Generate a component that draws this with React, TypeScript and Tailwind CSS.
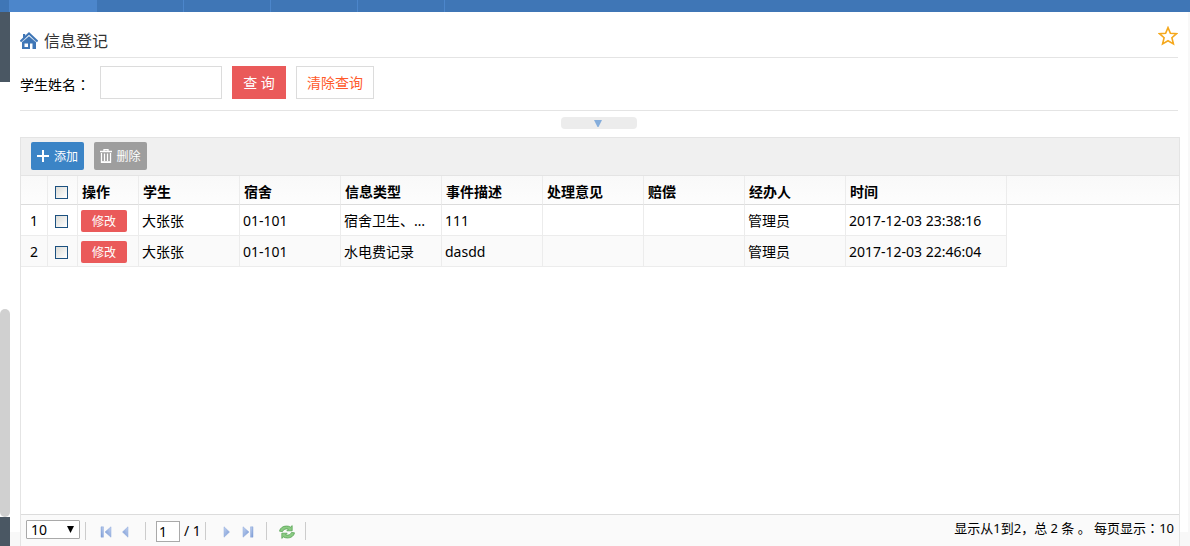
import { useState } from "react";

type Row = {
  student: string;
  room: string;
  kind: string;
  event: string;
  advice: string;
  compensation: string;
  operator: string;
  time: string;
};

const rows: Row[] = [
  { student: "大张张", room: "01-101", kind: "宿舍卫生、水电", event: "111", advice: "", compensation: "", operator: "管理员", time: "2017-12-03 23:38:16" },
  { student: "大张张", room: "01-101", kind: "水电费记录", event: "dasdd", advice: "", compensation: "", operator: "管理员", time: "2017-12-03 22:46:04" },
];

const headings = ["学生", "宿舍", "信息类型", "事件描述", "处理意见", "赔偿", "经办人", "时间"];

function NavBar() {
  return (
    <nav className="flex h-3 shrink-0 bg-[#3f76b6]">
      <span className="w-[9px]" />
      <span className="w-[88px] bg-[#4c86cb]" />
      {[1, 2, 3, 4].map((n) => (
        <span key={n} className="w-[87px] border-r border-[#4c86cb]" />
      ))}
    </nav>
  );
}

function HomeIcon() {
  return (
    <svg width="18" height="18" viewBox="0 0 18 18" aria-hidden="true">
      <path d="M2 9.500 9 4l7 5.500V17h-3.500v-5.500H10V17H2z" fill="#3f76b6" />
      <path d="M.4 9.400 9 1.400l8.600 8" fill="none" stroke="#3f76b6" strokeWidth="2" />
      <path d="M2.200 9.800 9 3.800l6.800 6" fill="none" stroke="#d3e1f1" strokeWidth=".8" />
      <path d="M3 2h2.200v2.600L3 6.500z" fill="#3f76b6" />
      <path d="M4.500 11.500H8V15H4.500z" fill="#fff" />
    </svg>
  );
}

function StarIcon() {
  return (
    <svg width="20" height="20" viewBox="0 0 20 20" fill="none" stroke="#f5a81c" strokeWidth="1.6" aria-hidden="true">
      <path d="M10 1.600 12.400 7.200l6.200.5-4.700 4 1.500 6.200-5.400-3.200-5.400 3.200 1.500-6.200-4.700-4 6.200-.5z" />
    </svg>
  );
}

function TrashIcon() {
  return (
    <svg width="12" height="14" viewBox="0 0 12 14" fill="none" stroke="#fff" aria-hidden="true">
      <path d="M4 2V.5h4V2M0 2.500h12" strokeWidth="1.3" />
      <path d="M1.500 4v9.300h9V4M4.500 4.500V12M7.500 4.500V12" strokeWidth="1.3" />
      <path d="M1 13h10" strokeWidth="1.6" />
    </svg>
  );
}

function Arrow({ left = false, bar = false }: { left?: boolean; bar?: boolean }) {
  return (
    <svg width="12" height="12" viewBox="0 0 12 12" aria-hidden="true">
      <defs>
        <linearGradient id="arrowFill" x1="0" y1="0" x2="1" y2="1">
          <stop offset="0" stopColor="#c4d4f2" />
          <stop offset="1" stopColor="#7495d2" />
        </linearGradient>
      </defs>
      <g transform={left ? "matrix(-1 0 0 1 12 0)" : undefined} fill="url(#arrowFill)" stroke="#8fa9da" strokeWidth=".5">
        <path d={bar ? "M1 .8 7 6l-6 5.200z" : "M4 .8 9.500 6 4 11.200z"} />
        {bar && <path d="M8.500.8H11v10.400H8.500z" />}
      </g>
    </svg>
  );
}

function RefreshIcon() {
  return (
    <svg width="16" height="16" viewBox="0 0 16 16" stroke="#4f9d4e" strokeWidth=".7" fill="#8bcb83" aria-hidden="true">
      <path d="M.5 7.200C1 4 4 2 7.500 2c1.600 0 3 .4 4 1.100L13.200 1.600v5.200H7.800l1.500-1.600C7 4.400 4.300 5.200 3.500 7.600z" />
      <path d="M15.500 8.800c-.5 3.200-3.500 5.200-7 5.200-1.600 0-3-.4-4-1.100L2.800 14.400V9.200h5.400l-1.500 1.600c2.300.8 5 0 5.800-2.400z" />
    </svg>
  );
}

function Tick({ label, checked, onChange }: { label: string; checked: boolean; onChange: () => void }) {
  return (
    <input
      type="checkbox"
      aria-label={label}
      checked={checked}
      onChange={onChange}
      className="ml-[7px] block size-[13px] appearance-none border border-[#1c5180] bg-linear-to-br from-[#dcdcd7] to-white checked:from-[#1c5180] checked:to-[#1c5180]"
    />
  );
}

function Divider() {
  return <span className="h-[18px] w-px bg-[#ccc]" />;
}

function Colon() {
  return <span className="font-['Noto_Sans_CJK_TC',sans-serif]" lang="zh-Hant">：</span>;
}

function SideScroll() {
  return (
    <aside className="flex w-[10px] shrink-0 flex-col">
      <div className="h-[70px] bg-[#4a5763]" />
      <div className="flex-1" />
      <div className="h-[208px] rounded-[5px] bg-[#d0d0d0]" />
      <div className="h-[29px] bg-[#4a5763]" />
    </aside>
  );
}

function Gutter({ wide = false }: { wide?: boolean }) {
  return (
    <div className={wide ? "flex w-[10px] shrink-0 flex-col" : "flex w-2 shrink-0 flex-col"}>
      <div className="flex-1" />
      <div className="h-[14px] bg-[#f8f8f8]" />
    </div>
  );
}

export default function App() {
  const [name, setName] = useState("");
  const [page, setPage] = useState("1");
  const [picked, setPicked] = useState<number[]>([]);
  const toggle = (i: number) => setPicked(picked.includes(i) ? picked.filter((p) => p !== i) : [...picked, i]);
  const all = picked.length === rows.length;

  return (
    <div className="flex min-h-screen flex-col bg-white font-['Noto_Sans','Noto_Sans_CJK_SC',sans-serif] text-sm text-black">
      <NavBar />
      <div className="flex flex-1">
        <SideScroll />
        <Gutter wide />
        <main className="flex min-w-0 flex-1 flex-col">
          <header className="mr-0.5 flex h-[46px] items-center border-b border-[#e4e4e4] pt-3">
            <HomeIcon />
            <h1 className="pl-1.5 text-base text-[#333]">信息登记</h1>
            <button type="button" aria-label="收藏" className="mb-2.5 ml-auto">
              <StarIcon />
            </button>
          </header>
          <form className="mr-0.5 flex h-[53px] items-start border-b border-[#e4e4e4] pt-2" onSubmit={(e) => e.preventDefault()}>
            <label htmlFor="student" className="w-20 leading-9">学生姓名<Colon /></label>
            <input
              id="student"
              value={name}
              onChange={(e) => setName(e.target.value)}
              className="h-[33px] w-[122px] border border-[#dcdcdc] px-2"
            />
            <button type="submit" className="ml-2.5 h-[33px] w-[54px] bg-[#ea5a5a] text-white">查 询</button>
            <button type="button" onClick={() => setName("")} className="ml-2.5 h-[33px] w-[78px] border border-[#dcdcdc] text-[#ff5a2b]">
              清除查询
            </button>
          </form>
          <div className="mr-0.5 flex justify-center py-1.5">
            <button type="button" aria-label="折叠" className="flex h-3 w-[76px] items-center justify-center rounded bg-[#ececec] pr-0.5">
              <svg width="8" height="7" viewBox="0 0 8 7" aria-hidden="true">
                <path d="M0 0h8L4.500 7h-1z" fill="#85addb" />
              </svg>
            </button>
          </div>

          <section className="mt-0.5 flex flex-1 flex-col border border-b-0 border-[#e4e4e4]">
            <div className="flex h-[38px] items-start gap-2.5 border-b border-[#e4e4e4] bg-[#f0f0f0] px-2.5 pt-1 text-xs text-white">
              <button type="button" className="flex h-7 w-[53px] items-center justify-center gap-1 rounded-xs bg-[#3b84c6]">
                <svg width="13" height="12" viewBox="0 0 13 12" stroke="#fff" strokeWidth="2" aria-hidden="true">
                  <path d="M0 6h12M6 0v12" />
                </svg>
                <span className="pt-0.5">添加</span>
              </button>
              <button type="button" className="flex h-7 w-[53px] items-center justify-center gap-1 rounded-xs bg-[#9e9e9e]">
                <TrashIcon />
                <span className="pt-0.5">删除</span>
              </button>
            </div>

            <table className="w-full table-fixed border-separate border-spacing-0 text-left">
              <colgroup>
                <col className="w-[27px]" />
                <col className="w-[30px]" />
                <col className="w-[61px]" />
                {headings.slice(0, -1).map((h) => (
                  <col key={h} className="w-[101px]" />
                ))}
                <col className="w-[161px]" />
                <col />
              </colgroup>
              <thead className="bg-linear-to-b from-[#f9f9f9] to-[#fdfdfd]">
                <tr className="h-[29px] *:border-b *:border-r *:border-r-[#ececec] *:border-b-[#dcdcdc] *:p-0 *:pt-1">
                  <th />
                  <th><Tick label="全选" checked={all} onChange={() => setPicked(all ? [] : rows.map((_, i) => i))} /></th>
                  <th><div className="pl-1 leading-6">操作</div></th>
                  {headings.map((h) => (
                    <th key={h}><div className="pl-1 leading-6">{h}</div></th>
                  ))}
                  <th className="border-r-0!" />
                </tr>
              </thead>
              <tbody>
                {rows.map((r, i) => (
                  <tr key={i} className="h-[31px] *:border-b *:border-r *:border-[#ececec] *:p-0 *:pt-0.5 even:*:bg-[#fafafa]">
                    <td className="text-center">{i + 1}</td>
                    <td><Tick label={"选择" + (i + 1)} checked={picked.includes(i)} onChange={() => toggle(i)} /></td>
                    <td>
                      <button type="button" className="ml-[3px] block h-[22px] w-[46px] rounded-xs bg-[#ea5a5a] pt-0.5 text-xs text-white">修改</button>
                    </td>
                    {[r.student, r.room, r.kind, r.event, r.advice, r.compensation, r.operator, r.time].map((v, k) => (
                      <td key={k}><div className="truncate pr-3 pl-[3px]">{v}</div></td>
                    ))}
                    <td className="border-0! bg-white!" />
                  </tr>
                ))}
              </tbody>
            </table>

            <footer className="mt-auto flex h-8 items-start border-t border-[#dcdcdc] bg-[#fafafa] px-[5px]">
              <div className="relative mt-[5px]">
                <select aria-label="每页条数" className="block h-[19px] w-[54px] appearance-none rounded-[1px] border border-[#a9a9a9] bg-white pl-1 leading-4">
                  <option>10</option>
                  <option>20</option>
                  <option>50</option>
                </select>
                <svg className="pointer-events-none absolute top-1.5 right-1.5" width="7" height="7" viewBox="0 0 7 7" aria-hidden="true">
                  <path d="M0 0h7L3.500 7z" />
                </svg>
              </div>
              <div className="mt-[5px] ml-[5px] flex h-[22px] items-center">
                <Divider />
                <button type="button" aria-label="首页" className="mt-0.5 ml-3.5"><Arrow left bar /></button>
                <button type="button" aria-label="上一页" className="mt-0.5 mr-3 ml-2"><Arrow left /></button>
                <span className="w-px" />
                <Divider />
                <input
                  aria-label="页码"
                  value={page}
                  onChange={(e) => setPage(e.target.value)}
                  className="ml-2.5 h-[21px] w-6 border border-[#a9a9a9] bg-white pl-0.5"
                />
                <span className="mx-1 whitespace-nowrap">/ 1</span>
                <Divider />
                <button type="button" aria-label="下一页" className="mt-0.5 ml-3.5"><Arrow /></button>
                <button type="button" aria-label="末页" className="mt-0.5 mr-3 ml-2.5"><Arrow bar /></button>
                <Divider />
                <button type="button" aria-label="刷新" className="mt-0.5 mr-2.5 ml-3"><RefreshIcon /></button>
                <Divider />
              </div>
              <p className="mt-[3px] ml-auto text-[13px] leading-5">显示从1到2，总 2 条 。 每页显示<Colon />10</p>
            </footer>
          </section>
        </main>
        <Gutter />
        <div className="w-0.5 bg-[#f8f8f8]" />
      </div>
    </div>
  );
}
